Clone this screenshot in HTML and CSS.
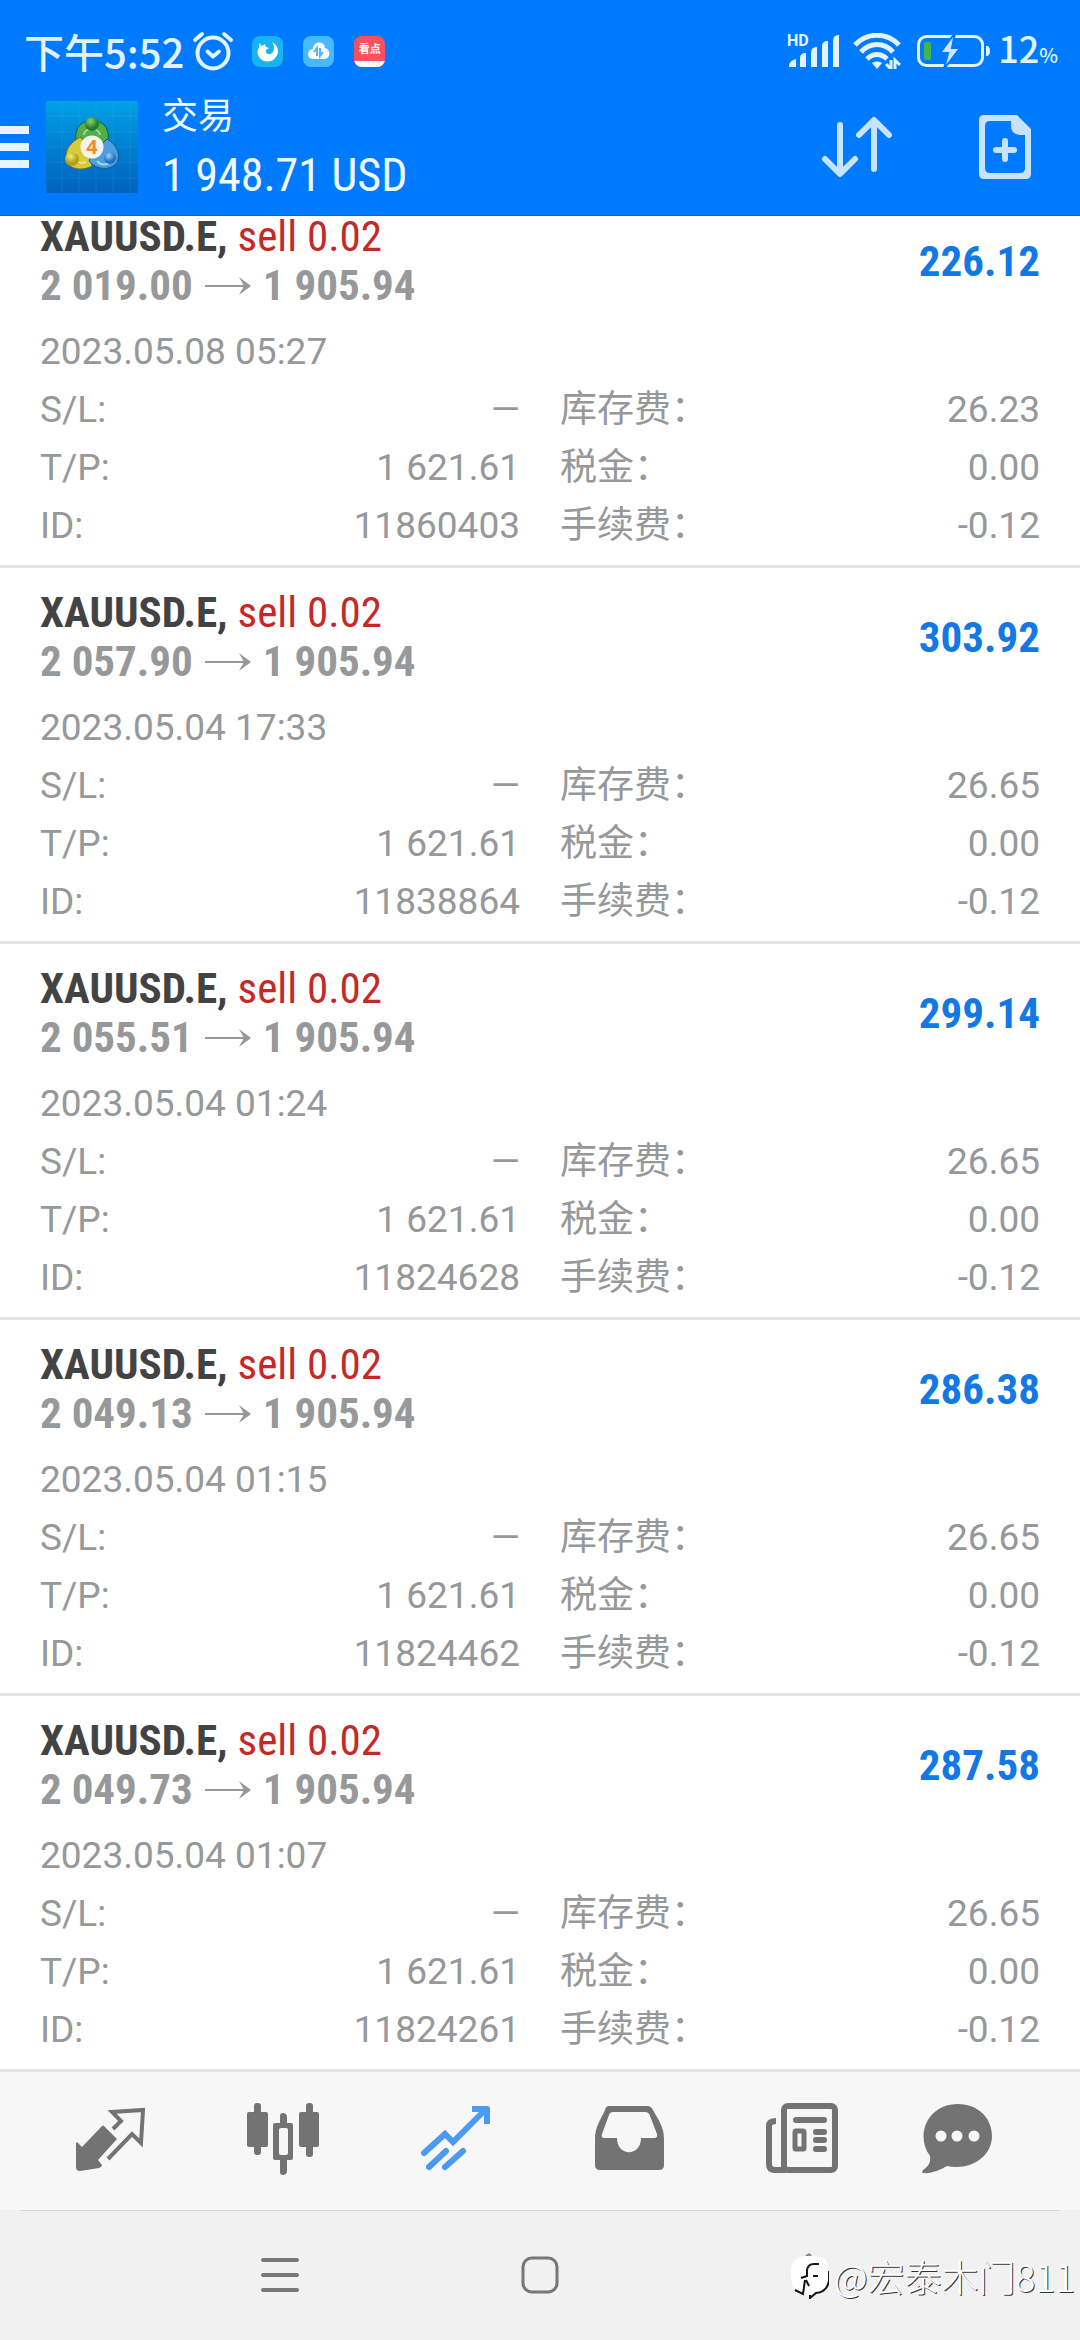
FILE: index.html
```html
<!DOCTYPE html>
<html lang="zh-CN">
<head>
<meta charset="utf-8">
<meta name="viewport" content="width=device-width, initial-scale=1">
<title>交易</title>
<link rel="stylesheet" href="styles.css">
</head>
<body>
<svg class="defs" aria-hidden="true">
  <symbol id="arrow" viewBox="0 0 46 18">
    <path d="M0 9H42" stroke="currentColor" stroke-width="2" fill="none"/>
    <path d="M34 0L46 9L34 18L39 9Z" fill="currentColor"/>
  </symbol>
</svg>

<header class="top">
  <div class="status">
    <span class="time">下午5:52</span>
    <svg class="alarm" width="42" height="40" viewBox="0 0 42 40" fill="none" stroke="#e2f2ff" stroke-width="4" stroke-linecap="round" stroke-linejoin="round">
      <circle cx="21" cy="22" r="15.5"/>
      <path d="M15.500 20.500L21 25.500L27 20.500M3 9L10 3M39 9L32 3"/>
    </svg>
    <div class="notes">
      <svg width="31" height="31" viewBox="0 0 31 31">
        <rect width="31" height="31" rx="8" fill="#18b3f3"/>
        <path d="M7 7L10 10L13 8L14 11L17 12L14 14C13 18 18 20 21 16C23 12 22 9 20 6C26 9 28 16 24 21C20 27 11 27 7 21C5 18 5 14 7 12Z" fill="#fff"/>
      </svg>
      <svg width="31" height="31" viewBox="0 0 31 31">
        <rect width="31" height="31" rx="8" fill="#47b9fc"/>
        <path d="M10 23C3 23 4 13 10 13C10 5 21 4 22 12C28 13 28 23 21 23Z" fill="#fff"/>
        <path d="M11 16L14 12V20M17 12V20L20 16" stroke="#47b9fc" stroke-width="2" fill="none"/>
      </svg>
      <span class="kandian">看点<i></i></span>
    </div>
    <div class="signals">
      <svg width="54" height="44" viewBox="0 -4 54 44" fill="#e2f2ff">
        <path d="M2 34C2 29 5 27 9 26V34ZM13 34V25C13 22 15 20 19 20V34ZM24 34V20C24 16 26 14 30 14V34ZM35 34V13C35 10 37 8 41 8V34ZM46 34V8C46 4 48 2 52 2V34Z"/>
        <text class="hd" x="0" y="13">HD</text>
      </svg>
      <svg class="wifi" width="48" height="36" viewBox="0 0 48 36" fill="none" stroke="#e2f2ff" stroke-width="5">
        <path d="M2 12C14 -1 34 -1 46 12M8 19C17 9 31 9 40 19M14 26C20 20 28 20 34 26"/>
        <path d="M19 30C22 28 26 28 29 30L24 36Z" fill="#e2f2ff" stroke="none"/>
        <path d="M38 27V36L33 31M42 36V27L47 32" stroke-width="3"/>
      </svg>
      <svg class="battery" width="73" height="36" viewBox="0 0 73 36">
        <rect x="1.500" y="3.500" width="64" height="29" rx="8" fill="none" stroke="#e2f2ff" stroke-width="3"/>
        <path d="M69 13C72 13 73 15 73 18S72 23 69 23Z" fill="#e2f2ff"/>
        <rect x="7" y="9" width="7" height="18" rx="2" fill="#43b649"/>
        <path d="M38 0L23 20H31L27 36L43 15H35Z" fill="#d0e6ff" stroke="#007aff" stroke-width="2"/>
      </svg>
      <span class="level">12<small>%</small></span>
    </div>
  </div>

  <div class="appbar">
    <button class="menu" aria-label="菜单">
      <svg width="29" height="42" viewBox="0 0 29 42" fill="#e6f4ff"><path d="M0 0H29V8H0ZM0 17H29V25H0ZM0 34H29V42H0Z"/></svg>
    </button>
    <svg class="logo" width="92" height="92" viewBox="0 0 92 92">
      <defs>
        <linearGradient id="sky" x2="0" y2="1"><stop offset="0" stop-color="#00a2e6"/><stop offset=".5" stop-color="#007fd0"/><stop offset="1" stop-color="#0062be"/></linearGradient>
        <radialGradient id="g" cx=".4" cy=".3"><stop offset="0" stop-color="#8fd07c"/><stop offset="1" stop-color="#23802c"/></radialGradient>
        <radialGradient id="y" cx=".4" cy=".3"><stop offset="0" stop-color="#f2ee7a"/><stop offset="1" stop-color="#b3a018"/></radialGradient>
        <radialGradient id="b" cx=".4" cy=".3"><stop offset="0" stop-color="#9ad4fa"/><stop offset="1" stop-color="#1d74c6"/></radialGradient>
      </defs>
      <rect width="92" height="92" fill="url(#sky)"/>
      <path d="M16 0V92M33 0V92M50 0V92M67 0V92M84 0V92M0 15H92M0 31H92M0 46H92M0 61H92M0 77H92" stroke="#5cc4f5" stroke-opacity=".15"/>
      <path d="M30 42C28 26 35 20 46 20S64 26 62 42L53 51L38 47Z" fill="#53ad48" stroke="#1e5f3c"/>
      <path d="M35 36C32 37 19 44 20 57C20 68 36 71 46 65L42 50Z" fill="#d8cb39" stroke="#766d20"/>
      <path d="M61 38C69 42 74 51 72 59C69 69 52 71 43 60L46 53Z" fill="#4b9fe0" stroke="#1a568e"/>
      <path d="M38 34C38 26 53 26 54 34M30 51C24 57 32 64 40 61M51 60C57 67 66 62 67 57" fill="none" stroke="#e8f4d0" stroke-opacity=".6" stroke-width="2"/>
      <circle cx="46" cy="23" r="7" fill="url(#g)"/>
      <circle cx="26" cy="58" r="7" fill="url(#y)"/>
      <circle cx="64" cy="57" r="6" fill="url(#b)"/>
      <circle cx="46" cy="46" r="11.500" fill="#f5f3f0"/>
      <text class="four" x="46" y="53" text-anchor="middle">4</text>
    </svg>
    <div class="account">
      <h1 class="title">交易</h1>
      <div class="balance">1 948.71 USD</div>
    </div>
    <button aria-label="排序">
      <svg width="72" height="64" viewBox="0 0 72 64" fill="none" stroke="#c8e3ff" stroke-width="6" stroke-linecap="round" stroke-linejoin="round">
        <path d="M19 10V58M4 44L19 59L34 44M53 54V6M38 20L53 5L68 20"/>
      </svg>
    </button>
    <button aria-label="新订单">
      <svg width="52" height="64" viewBox="0 0 52 64">
        <path fill="#c8e3ff" fill-rule="evenodd" d="M5 0H38L52 14V59Q52 64 47 64H5Q0 64 0 59V5Q0 0 5 0ZM11 6Q6 6 6 11V53Q6 58 11 58H41Q46 58 46 53V20H41Q32 19 32 11V6Z"/>
        <path d="M26 26V44M17 35H35" stroke="#c8e3ff" stroke-width="6" stroke-linecap="round"/>
      </svg>
    </button>
  </div>
</header>

<main class="viewport">
  <div class="orders">
    <article class="order">
      <div class="summary">
        <div>
          <div class="line"><b class="symbol">XAUUSD.E,</b> <span class="side">sell 0.02</span></div>
          <div class="line prices">2 019.00<svg class="arrow"><use href="#arrow"/></svg>1 905.94</div>
        </div>
        <div class="profit">226.12</div>
      </div>
      <time class="date">2023.05.08 05:27</time>
      <div class="details">
        <dl><dt>S/L:</dt><dd>—</dd><dt>T/P:</dt><dd>1 621.61</dd><dt>ID:</dt><dd>11860403</dd></dl>
        <dl><dt>库存费：</dt><dd>26.23</dd><dt>税金：</dt><dd>0.00</dd><dt>手续费：</dt><dd>-0.12</dd></dl>
      </div>
    </article>
    <article class="order">
      <div class="summary">
        <div>
          <div class="line"><b class="symbol">XAUUSD.E,</b> <span class="side">sell 0.02</span></div>
          <div class="line prices">2 057.90<svg class="arrow"><use href="#arrow"/></svg>1 905.94</div>
        </div>
        <div class="profit">303.92</div>
      </div>
      <time class="date">2023.05.04 17:33</time>
      <div class="details">
        <dl><dt>S/L:</dt><dd>—</dd><dt>T/P:</dt><dd>1 621.61</dd><dt>ID:</dt><dd>11838864</dd></dl>
        <dl><dt>库存费：</dt><dd>26.65</dd><dt>税金：</dt><dd>0.00</dd><dt>手续费：</dt><dd>-0.12</dd></dl>
      </div>
    </article>
    <article class="order">
      <div class="summary">
        <div>
          <div class="line"><b class="symbol">XAUUSD.E,</b> <span class="side">sell 0.02</span></div>
          <div class="line prices">2 055.51<svg class="arrow"><use href="#arrow"/></svg>1 905.94</div>
        </div>
        <div class="profit">299.14</div>
      </div>
      <time class="date">2023.05.04 01:24</time>
      <div class="details">
        <dl><dt>S/L:</dt><dd>—</dd><dt>T/P:</dt><dd>1 621.61</dd><dt>ID:</dt><dd>11824628</dd></dl>
        <dl><dt>库存费：</dt><dd>26.65</dd><dt>税金：</dt><dd>0.00</dd><dt>手续费：</dt><dd>-0.12</dd></dl>
      </div>
    </article>
    <article class="order">
      <div class="summary">
        <div>
          <div class="line"><b class="symbol">XAUUSD.E,</b> <span class="side">sell 0.02</span></div>
          <div class="line prices">2 049.13<svg class="arrow"><use href="#arrow"/></svg>1 905.94</div>
        </div>
        <div class="profit">286.38</div>
      </div>
      <time class="date">2023.05.04 01:15</time>
      <div class="details">
        <dl><dt>S/L:</dt><dd>—</dd><dt>T/P:</dt><dd>1 621.61</dd><dt>ID:</dt><dd>11824462</dd></dl>
        <dl><dt>库存费：</dt><dd>26.65</dd><dt>税金：</dt><dd>0.00</dd><dt>手续费：</dt><dd>-0.12</dd></dl>
      </div>
    </article>
    <article class="order">
      <div class="summary">
        <div>
          <div class="line"><b class="symbol">XAUUSD.E,</b> <span class="side">sell 0.02</span></div>
          <div class="line prices">2 049.73<svg class="arrow"><use href="#arrow"/></svg>1 905.94</div>
        </div>
        <div class="profit">287.58</div>
      </div>
      <time class="date">2023.05.04 01:07</time>
      <div class="details">
        <dl><dt>S/L:</dt><dd>—</dd><dt>T/P:</dt><dd>1 621.61</dd><dt>ID:</dt><dd>11824261</dd></dl>
        <dl><dt>库存费：</dt><dd>26.65</dd><dt>税金：</dt><dd>0.00</dd><dt>手续费：</dt><dd>-0.12</dd></dl>
      </div>
    </article>
  </div>
</main>

<nav class="tabs">
  <button aria-label="行情">
    <svg width="72" height="72" viewBox="0 0 72 72">
      <path d="M30 23L43 36L24 57L28 62Q28 64 25 65L6 68Q2 68 2 64V40Q3 38 5 41L8 44L28 23Q29 22 30 23Z" fill="#737373"/>
      <path d="M39 26L47 18L38 9L69 7L67 40L58 31L34 56" fill="none" stroke="#737373" stroke-width="4"/>
    </svg>
  </button>
  <button aria-label="图表">
    <svg width="72" height="72" viewBox="0 0 72 72" fill="#737373">
      <rect y="9" width="21" height="35" rx="2"/><rect x="7" width="7" height="52" rx="3"/>
      <rect x="52" y="9" width="20" height="35" rx="2"/><rect x="59" width="7" height="54" rx="3"/>
      <path fill-rule="evenodd" d="M28 20H44Q46 20 46 22V55Q46 57 44 57H28Q26 57 26 55V22Q26 20 28 20ZM34 25Q32 25 32 27V50Q32 52 34 52H39Q41 52 41 50V27Q41 25 39 25Z"/>
      <path d="M33 20V13Q33 10 36 10T40 13V20ZM33 57V69Q33 72 36 72T40 69V57Z"/>
    </svg>
  </button>
  <button aria-label="交易" aria-current="page">
    <svg width="72" height="72" viewBox="0 0 72 72" fill="none" stroke="#4a9af2" stroke-width="6" stroke-linecap="round">
      <path d="M4 50L25 31L33 39L66 6"/>
      <path d="M52 6H67V21" stroke-linecap="butt" stroke-linejoin="round"/>
      <path d="M9 64L26 48M25 64L43 48"/>
    </svg>
  </button>
  <button aria-label="历史">
    <svg width="72" height="72" viewBox="0 0 72 72">
      <path fill="#737373" fill-rule="evenodd" d="M16 3H54Q58 3 60 7C66 18 71 24 71 36V62Q71 67 66 67H7Q2 67 2 62V36C2 24 7 18 12 7Q13 3 16 3ZM20 9Q17 9 16 12L9 31Q8 35 11 35H24C24 54 48 54 48 35H61Q65 35 64 31L57 13Q56 9 52 9Z"/>
    </svg>
  </button>
  <button aria-label="新闻">
    <svg width="72" height="72" viewBox="0 0 72 72" fill="none" stroke="#737373" stroke-width="6">
      <rect x="18" y="3" width="51" height="64" rx="4"/>
      <path d="M10 18Q3 18 3 23V61Q3 67 9 67H20"/>
      <path d="M30 17H58M50 29H58M50 37H58M50 46H58" stroke-linecap="round"/>
      <rect x="29" y="28" width="9" height="18" rx="1" stroke-width="5"/>
    </svg>
  </button>
  <button aria-label="消息">
    <svg width="72" height="72" viewBox="0 0 72 72">
      <path d="M37 1C57 1 71 15 71 33C71 54 49 68 26 63C19 67 10 71 2 70C1 70 1 68 2 67C7 64 10 60 9 53C-6 33 6 1 37 1Z" fill="#737373"/>
      <g fill="#f7f7f7"><circle cx="20" cy="33" r="5.500"/><circle cx="36" cy="33" r="5.500"/><circle cx="53" cy="33" r="5.500"/></g>
    </svg>
  </button>
</nav>

<footer class="system">
  <button aria-label="最近任务">
    <svg width="38" height="38" viewBox="0 0 38 38" stroke="#777" stroke-width="4" stroke-linecap="round"><path d="M2 4H36M2 19H36M2 34H36"/></svg>
  </button>
  <button aria-label="主屏幕">
    <svg width="38" height="38" viewBox="0 0 38 38" fill="none" stroke="#777" stroke-width="3"><rect x="2" y="2" width="34" height="34" rx="9"/></svg>
  </button>
  <div class="credit">
    <svg width="38" height="46" viewBox="0 0 38 46">
      <path d="M14 3Q19 -3 21 4Z" fill="#888"/>
      <path d="M13 3H25Q38 4 38 18V27Q37 39 24 41L19 46L17 40H11Q0 36 0 24V17Q1 5 13 3Z" fill="#fff"/>
      <path d="M28 11H23Q17 11 16 17V23L10 25M22 23H27M15 27L18 33M14 27L12 41L4 37M38 18V28Q36 39 25 40L19 45V42" fill="none" stroke="#151515" stroke-width="2"/>
    </svg>
    <span>@宏泰木门811</span>
  </div>
</footer>
</body>
</html>
```
FILE: styles.css
```css
* { box-sizing: border-box; }

body {
  margin: 0;
  min-height: 100vh;
  display: flex;
  flex-direction: column;
  background: #fff;
  color: #969899;
  font-family: Roboto, "Noto Sans CJK SC", sans-serif;
  font-size: 37px;
}

svg { display: block; flex: none; }
.defs { position: absolute; width: 0; height: 0; }

button {
  display: flex;
  align-items: center;
  justify-content: center;
  padding: 0;
  border: 0;
  background: none;
}

/* Header */
.top {
  position: relative;
  z-index: 1;
  padding-top: 24px;
  background: #007aff;
  border-bottom: 1px solid #0a68c8;
}

.status {
  display: flex;
  align-items: center;
  height: 54px;
  padding: 0 22px 0 24px;
  color: #e2f2ff;
  font-family: "Noto Sans CJK SC", sans-serif;
  font-size: 36px;
  font-weight: 500;
  line-height: 54px;
}
.time { font-size: 40px; }
.alarm { margin-left: 8px; }
.notes { display: flex; gap: 20px; margin-left: 18px; }
.kandian {
  display: flex;
  flex-direction: column;
  align-items: center;
  justify-content: space-between;
  width: 31px;
  height: 31px;
  overflow: hidden;
  border-radius: 8px;
  background: #f9525c;
  color: #fff;
  font-size: 11px;
  font-weight: 700;
  line-height: 25px;
}
.kandian i { width: 100%; height: 8px; flex: none; background: #fff; }
.signals { display: flex; align-items: center; margin-left: auto; }
.hd { font: 700 16px Roboto, sans-serif; }
.wifi { margin-left: 12px; }
.battery { margin-left: 16px; }
.level { margin-left: 8px; }
.level small { font-size: 20px; }

.appbar { display: flex; align-items: center; height: 137px; padding-right: 49px; }
.logo { margin-left: 17px; }
.account { flex: 1; margin-left: 24px; padding-top: 4px; color: #f0faff; }
.title { margin: 0; font-size: 36px; font-weight: 400; line-height: 52px; }
.balance { font-family: "Roboto Condensed", "Liberation Sans Narrow", sans-serif; font-size: 46px; line-height: 64px; }
.appbar button + button { margin-left: 86px; }
.four { font: 700 20px "Open Sans", sans-serif; fill: #f28a2c; }

/* Open positions, scrolled slightly under the header */
.viewport { overflow: hidden; }
.orders { margin-top: -24px; }
.order { padding: 20px 40px 10px; border-bottom: 3px solid #e4e4e4; }
.summary {
  display: flex;
  align-items: center;
  justify-content: space-between;
  font-family: "Roboto Condensed", "Liberation Sans Narrow", sans-serif;
  font-size: 43px;
  line-height: 49px;
}
.line { display: flex; align-items: center; gap: 10px; }
.symbol { color: #434343; }
.side { color: #c62828; }
.prices { font-weight: 700; gap: 12px; }
.arrow { width: 46px; height: 18px; }
.profit { color: #1278e6; font-weight: 700; }
.date { display: block; margin-top: 13px; line-height: 58px; }
.details { display: grid; grid-template-columns: 1fr 1fr; gap: 40px; }
dl { display: grid; grid-template-columns: auto 1fr; grid-auto-rows: 58px; margin: 0; line-height: 58px; }
dd { margin: 0; text-align: right; }

/* Tabs */
.tabs {
  display: grid;
  grid-template-columns: repeat(5, 173fr) 138fr;
  padding: 0 54px 4px 23px;
  height: 138px;
  background: #f7f7f7;
}

.system {
  position: relative;
  flex: 1;
  display: flex;
  align-items: center;
  justify-content: center;
  gap: 222px;
  min-height: 130px;
  padding-right: 260px;
  background: linear-gradient(#d6d6d6, #d6d6d6) center top / calc(100% - 40px) 1px no-repeat #f1f1f1;
}

/* Author mark laid over the system bar */
.credit {
  position: absolute;
  right: 5px;
  bottom: 36px;
  display: flex;
  align-items: center;
  gap: 5px;
  color: #fff;
  font-family: "Noto Sans CJK SC", sans-serif;
  font-size: 37px;
  font-weight: 300;
  line-height: 56px;
  text-shadow: 1px 1px 0 #333;
}
```
